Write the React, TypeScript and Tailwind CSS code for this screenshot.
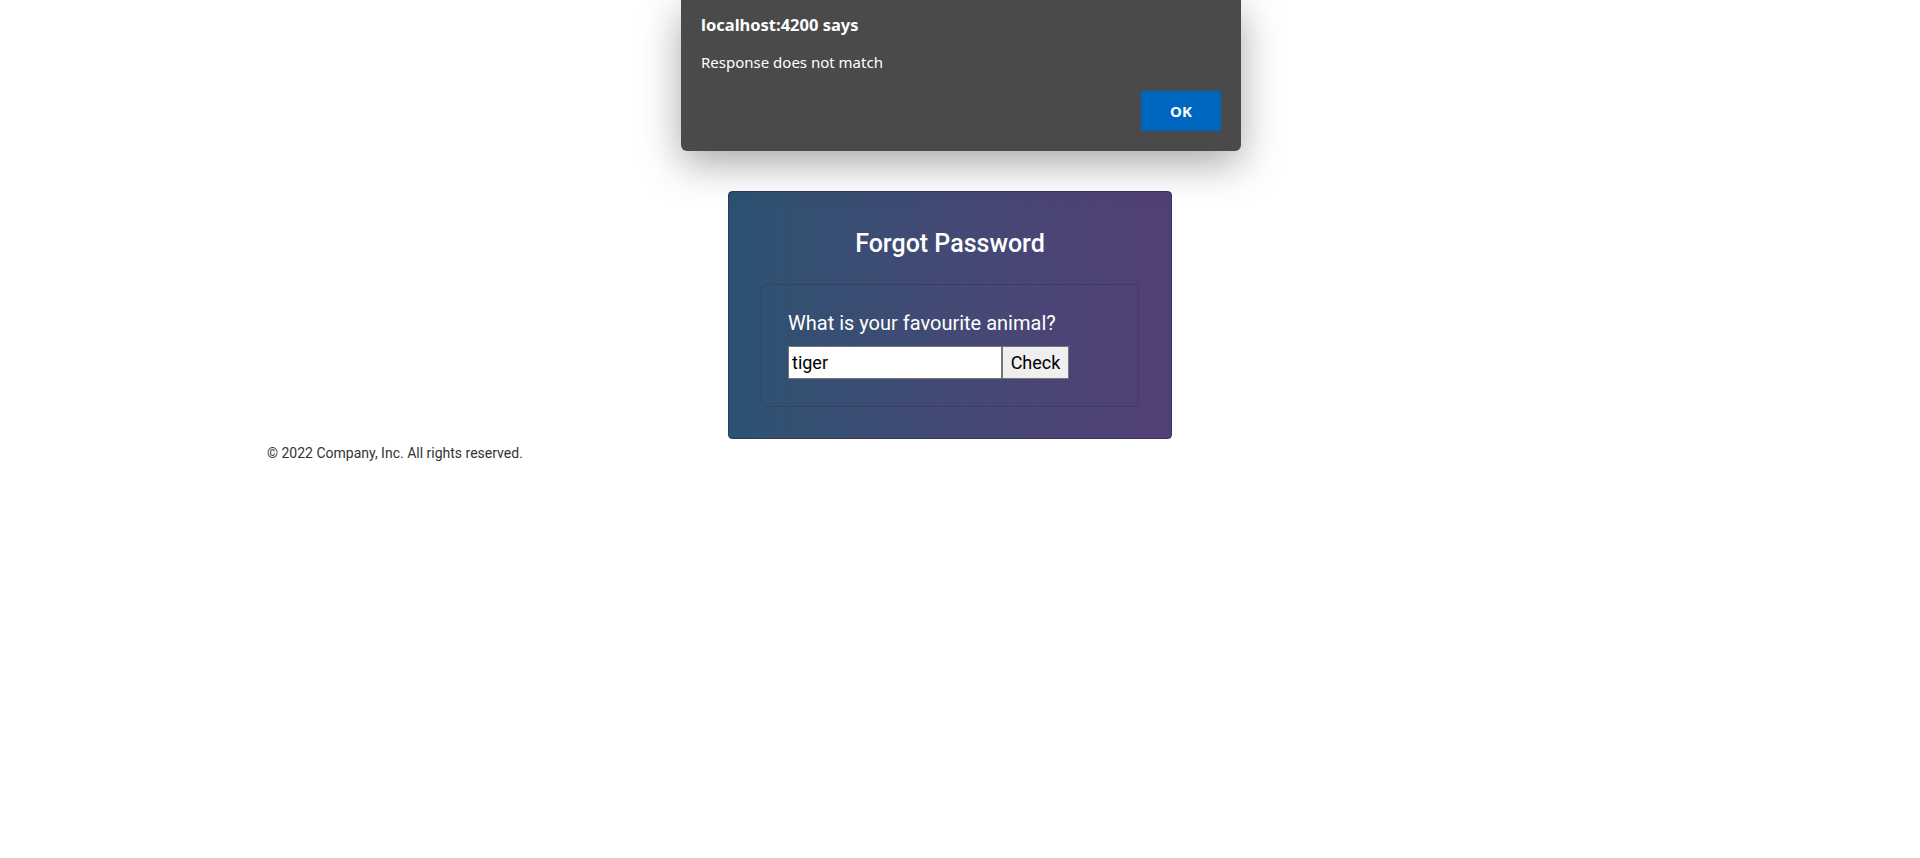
import React, { useState } from "react";

export default function App() {
  const [answer, setAnswer] = useState("tiger");

  return (
    <div className="relative min-h-[858px] bg-white font-['Roboto',sans-serif]">
      {/* Page content */}
      <div className="pt-[191px]">
        <div className="flex justify-center pr-[20px]">
          <div className="w-[444px] rounded-[4px] border border-[#34365a] bg-gradient-to-r from-[#2b5272] to-[#533f77] px-[32px] pt-[37px] pb-[31px]">
            <h2 className="text-center text-[25px] leading-[29px] font-medium text-white">
              Forgot Password
            </h2>
            <div className="mt-[26px] rounded-[4px] border border-[#3a3f63] px-[26px] pt-[26px] pb-[27px]">
              <p className="text-[20px] leading-[24px] text-white">
                What is your favourite animal?
              </p>
              <div className="mt-[11px] flex">
                <input
                  type="text"
                  value={answer}
                  onChange={(e) => setAnswer(e.target.value)}
                  className="h-[33px] w-[214px] border border-[#767676] bg-white px-[3px] text-[18px] text-black outline-none"
                />
                <button className="h-[33px] w-[67px] border border-[#767676] bg-[#efefef] px-[6px] text-[18px] text-black">
                  Check
                </button>
              </div>
            </div>
          </div>
        </div>
        <footer className="pl-[267px] pt-[4px] text-[14px] leading-[20px] text-[#333]">
          © 2022 Company, Inc. All rights reserved.
        </footer>
      </div>

      {/* Browser alert dialog */}
      <div className="absolute left-[681px] top-0 w-[560px] rounded-b-[6px] bg-[#4a4a4a] px-[20px] pt-[13px] pb-[20px] font-['Noto_Sans',sans-serif] text-white shadow-[0_12px_40px_rgba(0,0,0,0.35)]">
        <div className="text-[16.5px] leading-[24px] font-bold">localhost:4200 says</div>
        <div className="mt-[15px] text-[15px] leading-[20px]">Response does not match</div>
        <div className="mt-[19px] flex justify-end">
          <button className="h-[40px] w-[80px] rounded-[3px] bg-[#0067c0] text-[15px] font-bold text-white">
            OK
          </button>
        </div>
      </div>
    </div>
  );
}
